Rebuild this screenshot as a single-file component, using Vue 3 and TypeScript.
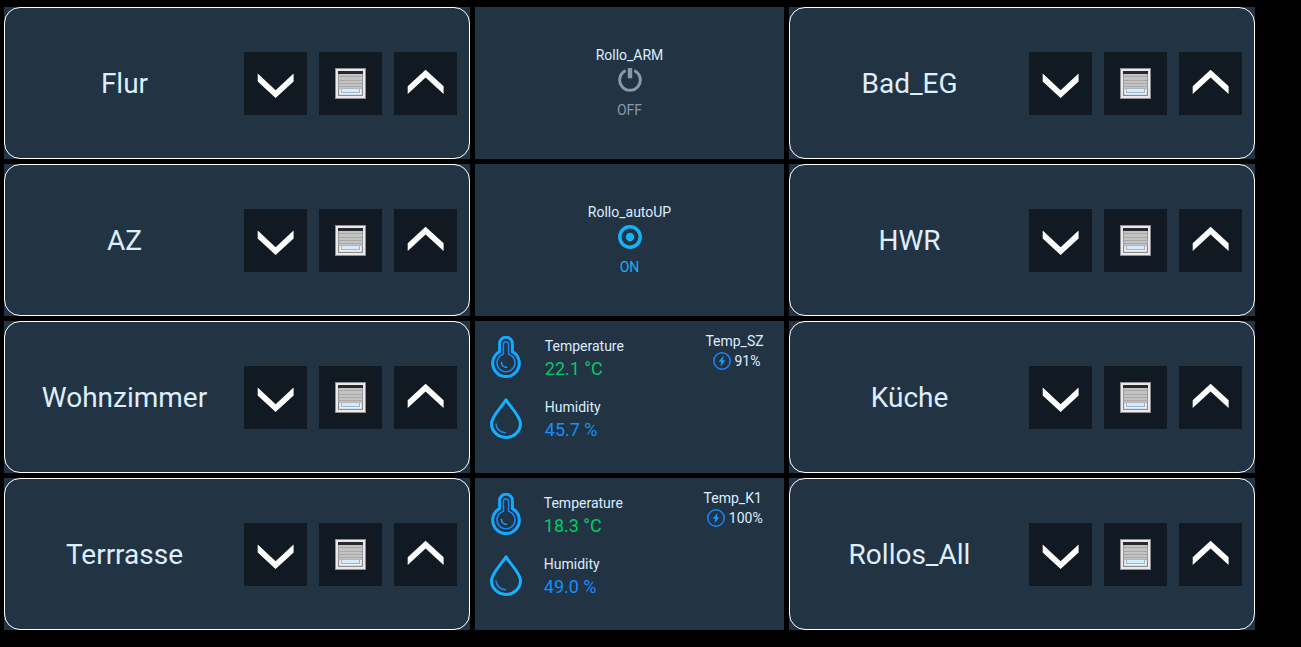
<script setup lang="ts">
interface Blind {
  kind: 'blind'
  name: string
}
interface Toggle {
  kind: 'toggle'
  name: string
  on: boolean
}
interface Sensor {
  kind: 'sensor'
  name: string
  temperature: string
  humidity: string
  battery: string
}
type Tile = Blind | Toggle | Sensor

const tiles: Tile[] = [
  { kind: 'blind', name: 'Flur' },
  { kind: 'toggle', name: 'Rollo_ARM', on: false },
  { kind: 'blind', name: 'Bad_EG' },
  { kind: 'blind', name: 'AZ' },
  { kind: 'toggle', name: 'Rollo_autoUP', on: true },
  { kind: 'blind', name: 'HWR' },
  { kind: 'blind', name: 'Wohnzimmer' },
  { kind: 'sensor', name: 'Temp_SZ', temperature: '22.1 °C', humidity: '45.7 %', battery: '91%' },
  { kind: 'blind', name: 'Küche' },
  { kind: 'blind', name: 'Terrrasse' },
  { kind: 'sensor', name: 'Temp_K1', temperature: '18.3 °C', humidity: '49.0 %', battery: '100%' },
  { kind: 'blind', name: 'Rollos_All' },
]
</script>

<template>
  <main class="board">
    <template v-for="tile in tiles" :key="tile.name">
      <section v-if="tile.kind === 'blind'" class="tile wide">
        <div class="blind">
          <h2 class="blind-name">{{ tile.name }}</h2>
          <div class="controls">
            <button type="button" class="control" :aria-label="tile.name + ' down'">
              <svg viewBox="0 0 63 63" width="63" height="63">
                <path fill="#fff" d="M13.7 21.6 31.6 38.3 49.6 21.6V29.4L31.6 46 13.7 29.4Z" />
              </svg>
            </button>
            <button type="button" class="control" :aria-label="tile.name + ' stop'">
              <svg viewBox="0 0 31 31" width="31" height="31">
                <rect width="31" height="31" fill="#8f8e95" />
                <rect x="1" y="1" width="29" height="29" fill="#ece9ed" />
                <rect x="3" y="3" width="25" height="25" fill="#8d8d8f" />
                <rect x="4" y="4" width="23" height="23" fill="#dcdcde" />
                <rect x="5" y="20" width="21" height="6" fill="#f1f1f3" />
                <rect x="6" y="19" width="19" height="6" fill="#8fbad3" />
                <rect x="7" y="19" width="17" height="5" fill="#d5edfb" />
                <rect x="3" y="5" width="25" height="16" fill="#c3c3c3" />
                <rect x="3" y="3" width="25" height="3" fill="#29282d" />
                <path stroke="#999" d="M3.5 6V21M27.5 6V21" />
                <path stroke="#a8a8a8" d="M4 8.5H27M4 12.5H27M4 15.5H27M4 18.5H27" />
                <path stroke="#b5b5b5" d="M4 20.5H27" />
              </svg>
            </button>
            <button type="button" class="control" :aria-label="tile.name + ' up'">
              <svg viewBox="0 0 63 63" width="63" height="63">
                <path fill="#fff" d="M31.6 17.8 49.6 34.3V42L31.6 25.5 13.7 42V34.3Z" />
              </svg>
            </button>
          </div>
        </div>
      </section>

      <section v-else-if="tile.kind === 'toggle'" class="tile">
        <button type="button" class="toggle" :class="{ on: tile.on }" :aria-pressed="tile.on">
          <span class="label">{{ tile.name }}</span>
          <svg v-if="tile.on" viewBox="0 0 24 24" width="24" height="24">
            <circle cx="12" cy="12" r="10.2" fill="none" stroke="currentColor" stroke-width="3.4" />
            <circle cx="12" cy="12" r="4.2" fill="currentColor" />
          </svg>
          <svg v-else viewBox="0 0 24 24" width="24" height="24">
            <path
              fill="none"
              stroke="currentColor"
              stroke-width="3"
              d="M7.7 2.7A10.3 10.3 0 1 0 16.3 2.7"
            />
            <rect x="9.8" y="0" width="4.4" height="10.3" fill="currentColor" />
          </svg>
          <span class="state">{{ tile.on ? 'ON' : 'OFF' }}</span>
        </button>
      </section>

      <section v-else class="tile">
        <div class="sensor">
          <div class="cell icons">
            <svg viewBox="0 0 42 42" width="42" height="42">
              <g fill="none" stroke-linecap="round">
                <path
                  stroke="#14a8ff"
                  stroke-width="3"
                  d="M14.6 7.6A6.4 6.4 0 0 1 27.4 7.6V15.6A13.3 13.3 0 1 1 14.6 15.6Z"
                />
                <path
                  stroke="#1589f8"
                  stroke-width="1.6"
                  d="M18.4 18.2V8.4A2.6 2.6 0 0 1 23.6 8.4V18.2A9 9 0 1 1 18.4 18.2"
                />
                <path stroke="#1e9bff" stroke-width="1.6" d="M16.4 26.5A5 5 0 0 0 21.6 31.2" />
              </g>
            </svg>
            <svg viewBox="0 0 42 42" width="42" height="42">
              <g fill="none" stroke-linecap="round" stroke-linejoin="round">
                <path
                  stroke="#14b1ff"
                  stroke-width="3"
                  d="M21 1.8C17.5 8 6.5 18 6.5 25.8A14.5 13.6 0 0 0 35.5 25.8C35.500 18 24.500 8 21 1.800Z"
                />
                <path stroke="#168bef" stroke-width="1.6" d="M11 26A10 9.500 0 0 0 20.500 34.800" />
              </g>
            </svg>
          </div>
          <dl class="cell readings">
            <div>
              <dt class="label">Temperature</dt>
              <dd class="value temperature">{{ tile.temperature }}</dd>
            </div>
            <div>
              <dt class="label">Humidity</dt>
              <dd class="value humidity">{{ tile.humidity }}</dd>
            </div>
          </dl>
          <div class="cell status">
            <div class="label">{{ tile.name }}</div>
            <div class="battery">
              <svg viewBox="0 0 18 18" width="18" height="18">
                <circle cx="9" cy="9" r="8.2" fill="none" stroke="#1687ff" stroke-width="1.5" />
                <path fill="#169cff" d="M10.6 3.5 5.7 9.7H8.3L7.4 14.5 12.3 8.3H9.7Z" />
              </svg>
              <span>{{ tile.battery }}</span>
            </div>
          </div>
        </div>
      </section>
    </template>
  </main>
</template>

<style>
body {
  margin: 0;
  background: #000;
}
</style>

<style scoped>
.board {
  display: grid;
  grid-template-columns: repeat(8, minmax(0, 1fr));
  gap: 5px;
  padding: 7px 46px 7px 4px;
  font-family: Roboto, "Liberation Sans", sans-serif;
  font-size: 14px;
  line-height: 20px;
  color: #def;
}

.tile {
  grid-column: span 2;
  display: flex;
  min-height: 152px;
  background: #223344;
}

.tile.wide {
  grid-column: span 3;
}

.blind {
  flex: 1;
  display: flex;
  align-items: center;
  box-sizing: border-box;
  padding-right: 12px;
  border: 1px solid #fff;
  border-radius: 16px;
}

.blind-name {
  flex: 1;
  margin: 0;
  padding-top: 2px;
  font-size: 28px;
  line-height: 40px;
  font-weight: 400;
  text-align: center;
}

.controls {
  display: flex;
  gap: 12px;
}

.control {
  display: flex;
  align-items: center;
  justify-content: center;
  width: 63px;
  height: 63px;
  padding: 0;
  border: 0;
  background: #111a22;
}

.toggle {
  flex: 1;
  display: flex;
  flex-direction: column;
  align-items: center;
  padding: 38px 0 0;
  border: 0;
  background: none;
  font: inherit;
  color: #8899aa;
}

.toggle.on {
  color: #12b4f5;
}

.toggle svg {
  margin: 3px 0 8px;
}

.label {
  color: #def;
}

.sensor {
  display: table;
  width: 100%;
  box-sizing: border-box;
  padding: 10px 8px 0 10px;
}

.cell {
  display: table-cell;
  vertical-align: top;
  white-space: nowrap;
}

.icons svg {
  display: block;
  margin: 5px 0 20px;
}

.readings {
  padding: 5px 25px 0 0;
}

.readings div {
  padding-bottom: 15px;
}

.value {
  margin: 0;
  font-size: 18px;
  line-height: 26px;
}

.temperature {
  color: #0c6;
}

.humidity {
  color: #1090ff;
}

.status {
  text-align: center;
}

.battery {
  display: flex;
  align-items: center;
  justify-content: center;
  gap: 4px;
  padding: 0 1px 0 5px;
}
</style>
